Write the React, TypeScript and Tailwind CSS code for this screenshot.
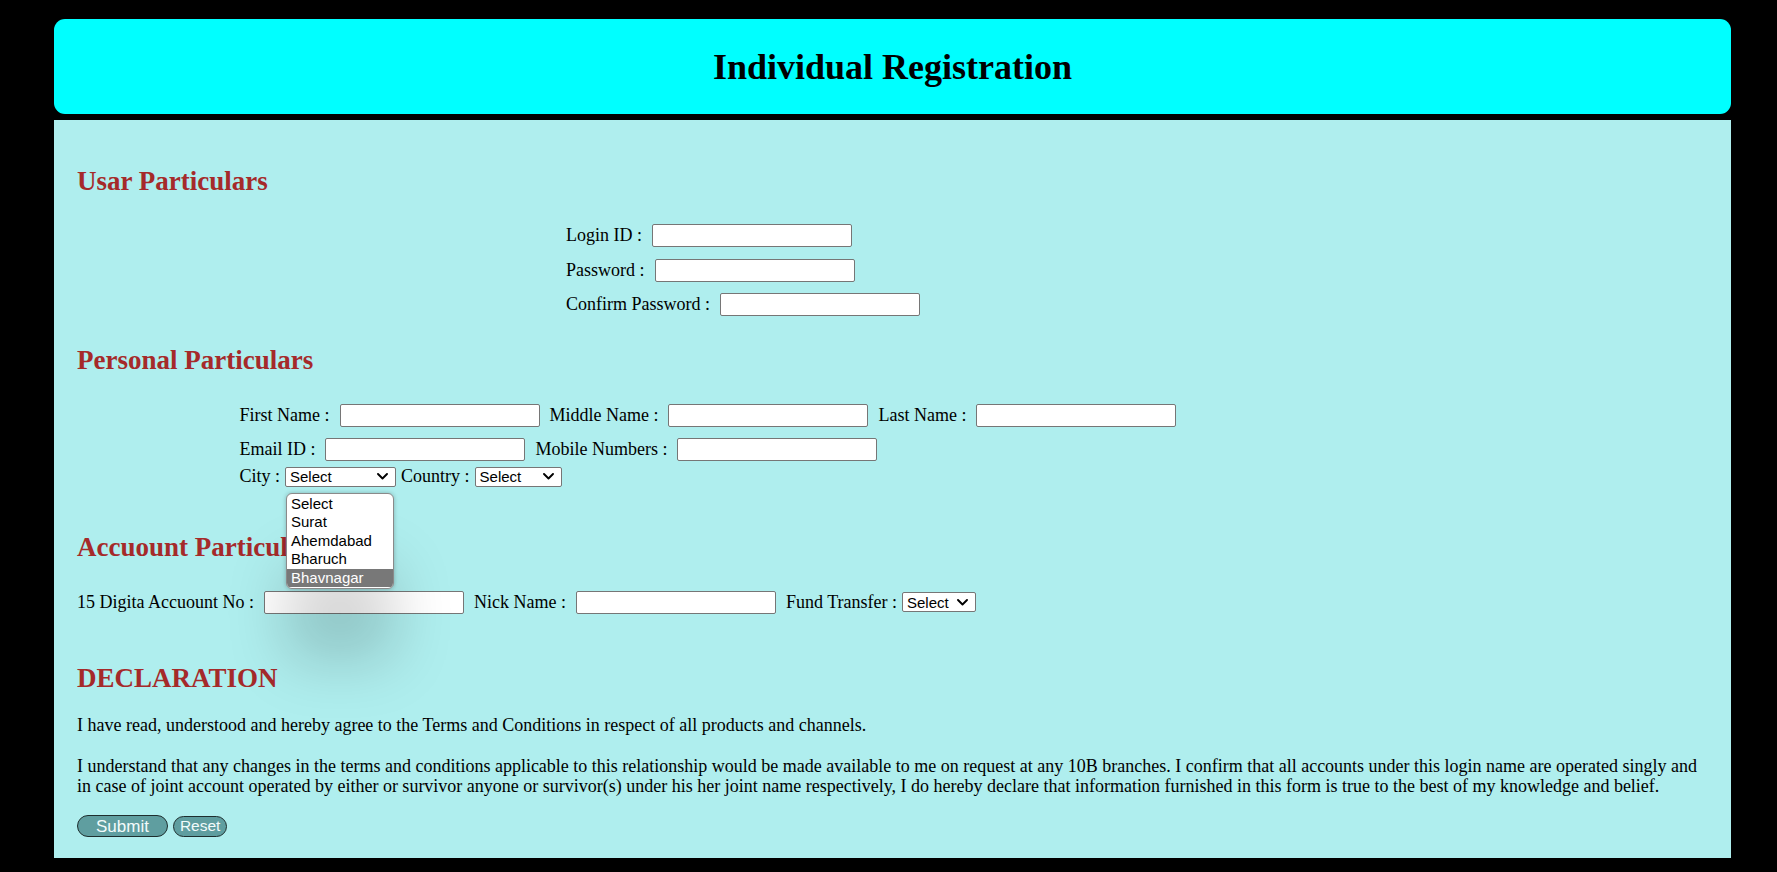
const serif = { fontFamily: '"Liberation Serif", "Times New Roman", serif' };

function TextBox({ w = 'w-[200px]' }: { w?: string }) {
  return (
    <input
      type="text"
      className={`${w} h-[23px] shrink-0 rounded-[2px] border border-[#767676] bg-white px-[2px] text-[15px] outline-none`}
    />
  );
}

function Chevron() {
  return (
    <svg width="11" height="7" viewBox="0 0 11 7" className="shrink-0">
      <polyline points="1,1 5.5,5.5 10,1" fill="none" stroke="#000" strokeWidth="1.9" strokeLinecap="round" strokeLinejoin="round" />
    </svg>
  );
}

function FakeSelect({ w }: { w: string }) {
  return (
    <div
      className={`${w} flex h-[20px] shrink-0 items-center justify-between rounded-[2px] border border-[#767676] bg-white pl-[4px] pr-[7px] text-[15px] leading-none text-black font-['Liberation_Sans',Arial,sans-serif]`}
    >
      <span>Select</span>
      <Chevron />
    </div>
  );
}

function Heading({ children }: { children: React.ReactNode }) {
  return <h2 className="text-[27px] font-bold leading-[31px] text-[#a52a2a]">{children}</h2>;
}

function Field({ label, w }: { label: string; w?: string }) {
  return (
    <>
      <span className="whitespace-nowrap">{label}</span>
      <TextBox w={w} />
    </>
  );
}

const cities = ['Select', 'Surat', 'Ahemdabad', 'Bharuch', 'Bhavnagar'];

export default function App() {
  return (
    <div className="min-h-[872px] bg-black pl-[54px] pr-[46px] pt-[19px] text-[18px] text-black" style={serif}>
      <header className="flex h-[95px] items-center justify-center rounded-[11px] bg-[#00ffff] pt-[2px]">
        <h1 className="text-[36px] font-bold leading-[41px]">Individual Registration</h1>
      </header>

      <main className="mt-[6px] bg-[#afeeee] px-[23px] pb-[21px] pt-[46px]">
        <Heading>Usar Particulars</Heading>
        <div className="ml-[489px] mt-[27px] flex flex-col gap-[11.5px]">
          <div className="flex h-[23px] items-center gap-[10px]">
            <Field label="Login ID :" />
          </div>
          <div className="flex h-[23px] items-center gap-[10px]">
            <Field label="Password :" />
          </div>
          <div className="flex h-[23px] items-center gap-[10px]">
            <Field label="Confirm Password :" />
          </div>
        </div>

        <div className="mt-[29px]">
          <Heading>Personal Particulars</Heading>
        </div>
        <div className="ml-[162.5px] mt-[27.5px] flex flex-col">
          <div className="flex h-[23px] items-center gap-[10px]">
            <Field label="First Name :" />
            <Field label="Middle Name :" />
            <Field label="Last Name :" />
          </div>
          <div className="mt-[11px] flex h-[23px] items-center gap-[10px]">
            <Field label="Email ID :" />
            <Field label="Mobile Numbers :" />
          </div>
          <div className="mt-[6px] flex h-[20px] items-center gap-[5px]">
            <span>City :</span>
            <div className="relative">
              <FakeSelect w="w-[111px]" />
              <ul className="absolute left-[1px] top-[26px] z-10 w-[108px] overflow-hidden rounded-[6px] border border-[#8a8a8a] bg-white py-[1px] text-[15px] leading-[18.6px] shadow-[0_72px_60px_0_rgba(0,0,0,0.17),0_0_4px_rgba(0,0,0,0.25)] font-['Liberation_Sans',Arial,sans-serif]">
                {cities.map((c, i) => (
                  <li key={c} className={i === 4 ? 'bg-[#787878] pl-[4px] text-white' : 'pl-[4px] text-black'}>
                    {c}
                  </li>
                ))}
              </ul>
            </div>
            <span>Country :</span>
            <FakeSelect w="w-[87px]" />
          </div>
        </div>

        <div className="mt-[45px]">
          <Heading>Accuount Particulars</Heading>
        </div>
        <div className="mt-[28px] flex h-[23px] items-center gap-[10px]">
          <Field label="15 Digita Accuount No :" />
          <Field label="Nick Name :" />
          <span className="whitespace-nowrap">Fund Transfer :</span>
          <div className="-ml-[5px]">
            <FakeSelect w="w-[74px]" />
          </div>
        </div>

        <div className="mt-[49.5px]">
          <Heading>DECLARATION</Heading>
        </div>
        <p className="mt-[20.5px] leading-[20.7px]">
          I have read, understood and hereby agree to the Terms and Conditions in respect of all products and channels.
        </p>
        <p className="mt-[20.5px] leading-[20.7px]">
          I understand that any changes in the terms and conditions applicable to this relationship would be made available to me on request at any 10B branches. I confirm that all accounts under this login name are operated singly and in case of joint account operated by either or survivor anyone or survivor(s) under his her joint name respectively, I do hereby declare that information furnished in this form is true to the best of my knowledge and belief.
        </p>

        <div className="mt-[18px] flex items-center gap-[5px] font-['Liberation_Sans',Arial,sans-serif]">
          <button className="h-[22px] rounded-full border border-[#1e2e2e] bg-[#5f9ea0] px-[18px] text-[17px] leading-none text-[#f2fbfb]">
            Submit
          </button>
          <button className="h-[21px] rounded-full border border-[#1e2e2e] bg-[#5f9ea0] px-[6px] text-[15.5px] leading-none text-[#f2fbfb]">
            Reset
          </button>
        </div>
      </main>
    </div>
  );
}
